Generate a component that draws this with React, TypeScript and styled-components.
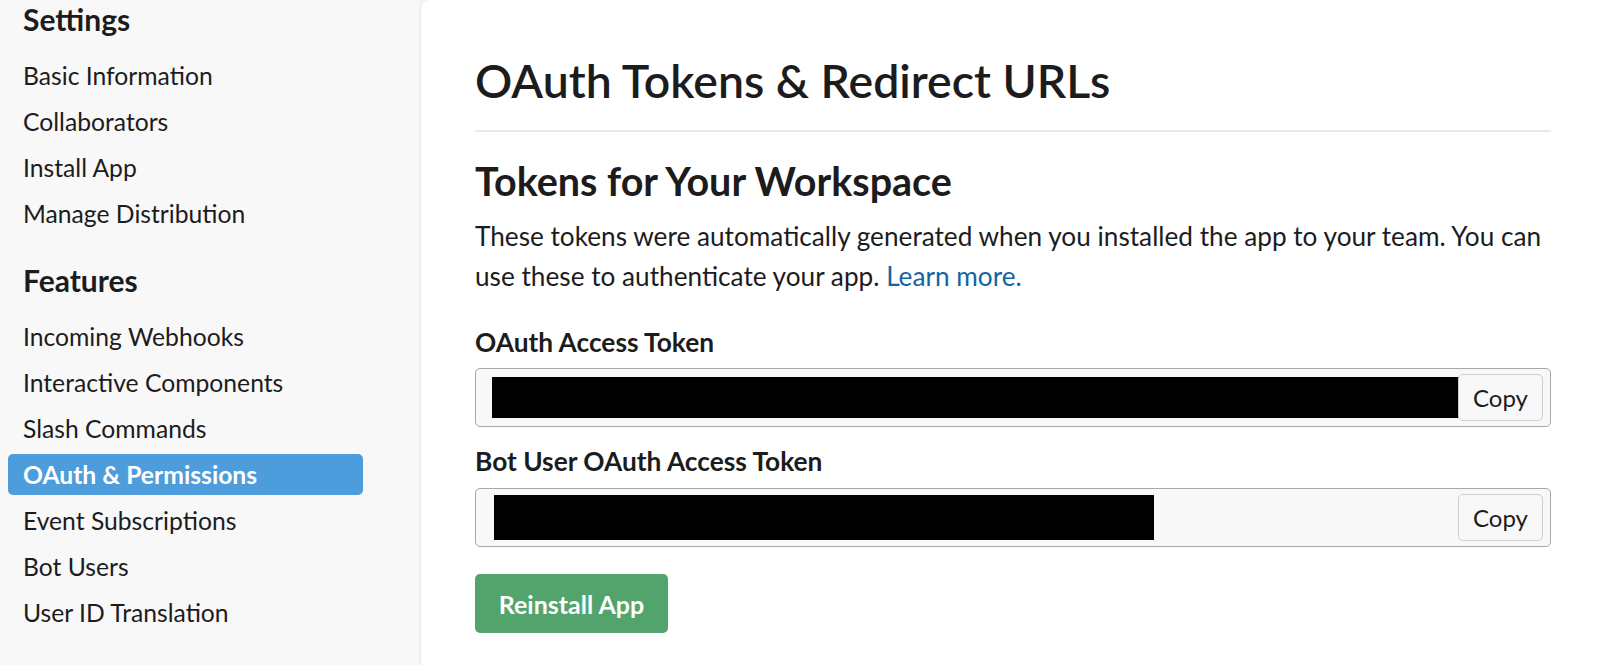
import React from "react";
import styled, { createGlobalStyle } from "styled-components";

const GlobalStyle = createGlobalStyle`
  html, body {
    margin: 0;
    padding: 0;
    background: #f8f8f8;
  }
  body {
    font-family: Lato, "Open Sans", "Liberation Sans", sans-serif;
    color: #1d1c1d;
  }
  * { box-sizing: border-box; }
`;

const Page = styled.div`
  display: flex;
  width: 100%;
  height: 665px;
  overflow: hidden;
  background: #f8f8f8;
`;

const Sidebar = styled.nav`
  flex: none;
  width: 421px;
  padding: 0 0 0 8px;
`;

const SideGroup = styled.div`
  margin-bottom: 27px;
`;

const SideHeading = styled.h3`
  margin: 0;
  padding-left: 15px;
  font-size: 30px;
  font-weight: 700;
  line-height: 38px;
  color: #1d1c1d;
`;

const SideList = styled.ul`
  list-style: none;
  margin: 17px 0 0;
  padding: 0;
`;

const SideItem = styled.li<{ $active?: boolean }>`
  width: 355px;
  height: 41px;
  margin-bottom: 5px;
  padding-left: 15px;
  display: flex;
  align-items: center;
  border-radius: 5px;
  font-size: 24.7px;
  font-weight: ${({ $active }) => ($active ? 700 : 400)};
  color: ${({ $active }) => ($active ? "#ffffff" : "#1d1c1d")};
  background: ${({ $active }) => ($active ? "#4d9ddc" : "transparent")};
`;

const Main = styled.main`
  flex: 1;
  background: #ffffff;
  border-top-left-radius: 8px;
  box-shadow: -1px 0 3px rgba(0, 0, 0, 0.08);
  padding: 50px 50px 0 54px;
`;

const Title = styled.h1`
  margin: 0;
  font-size: 46.4px;
  font-weight: 600;
  line-height: 60px;
  color: #1d1c1d;
`;

const Rule = styled.hr`
  border: none;
  border-top: 2px solid #e8e8e8;
  margin: 20px 0 0;
`;

const SectionTitle = styled.h2`
  margin: 24px 0 0;
  font-size: 39.5px;
  font-weight: 700;
  line-height: 50px;
  color: #1d1c1d;
`;

const Para = styled.p`
  margin: 10px 0 0;
  font-size: 26.2px;
  line-height: 40px;
  color: #1d1c1d;
`;

const Link = styled.a`
  color: #1264a3;
  text-decoration: none;
`;

const Label = styled.div<{ $gap: number }>`
  margin-top: ${({ $gap }) => $gap}px;
  font-size: 26.3px;
  font-weight: 700;
  line-height: 34px;
  color: #1d1c1d;
`;

const TokenField = styled.div<{ $gap: number }>`
  margin-top: ${({ $gap }) => $gap}px;
  height: 59px;
  display: flex;
  align-items: center;
  padding: 0 7px 0 16px;
  border: 1px solid #a8a8a8;
  border-radius: 5px;
  background: #f8f8f8;
`;

const Redaction = styled.div<{ $w: number; $h: number; $offset?: number }>`
  flex: none;
  width: ${({ $w }) => $w}px;
  height: ${({ $h }) => $h}px;
  margin-left: ${({ $offset }) => $offset || 0}px;
  background: #000000;
`;

const CopyButton = styled.button<{ $overlap?: number }>`
  flex: none;
  margin-left: ${({ $overlap }) => ($overlap ? `-${$overlap}px` : "auto")};
  width: 85px;
  height: 47px;
  border: 1px solid #cfcfcf;
  border-radius: 5px;
  background: #f8f8f8;
  font-family: inherit;
  font-size: 24px;
  color: #1d1c1d;
  padding: 0;
`;

const PrimaryButton = styled.button`
  margin-top: 27px;
  width: 193px;
  height: 59px;
  border: none;
  border-radius: 5px;
  background: #53a46c;
  color: #ffffff;
  font-family: inherit;
  font-size: 25px;
  font-weight: 700;
  padding: 0;
`;

const settings = ["Basic Information", "Collaborators", "Install App", "Manage Distribution"];
const features = [
  "Incoming Webhooks",
  "Interactive Components",
  "Slash Commands",
  "OAuth & Permissions",
  "Event Subscriptions",
  "Bot Users",
  "User ID Translation",
];

export default function App() {
  return (
    <>
      <GlobalStyle />
      <Page>
        <Sidebar>
          <SideGroup>
            <SideHeading>Settings</SideHeading>
            <SideList>
              {settings.map((s) => (
                <SideItem key={s}>{s}</SideItem>
              ))}
            </SideList>
          </SideGroup>
          <SideGroup>
            <SideHeading>Features</SideHeading>
            <SideList>
              {features.map((s) => (
                <SideItem key={s} $active={s === "OAuth & Permissions"}>
                  {s}
                </SideItem>
              ))}
            </SideList>
          </SideGroup>
        </Sidebar>
        <Main>
          <Title>OAuth Tokens &amp; Redirect URLs</Title>
          <Rule />
          <SectionTitle>Tokens for Your Workspace</SectionTitle>
          <Para>
            These tokens were automatically generated when you installed the app to your team. You can
            <br />
            use these to authenticate your app. <Link href="#">Learn more.</Link>
          </Para>
          <Label $gap={29}>OAuth Access Token</Label>
          <TokenField $gap={9}>
            <Redaction $w={970} $h={41} />
            <CopyButton $overlap={4}>Copy</CopyButton>
          </TokenField>
          <Label $gap={17}>Bot User OAuth Access Token</Label>
          <TokenField $gap={10}>
            <Redaction $w={660} $h={45} $offset={2} />
            <CopyButton>Copy</CopyButton>
          </TokenField>
          <PrimaryButton>Reinstall App</PrimaryButton>
        </Main>
      </Page>
    </>
  );
}
